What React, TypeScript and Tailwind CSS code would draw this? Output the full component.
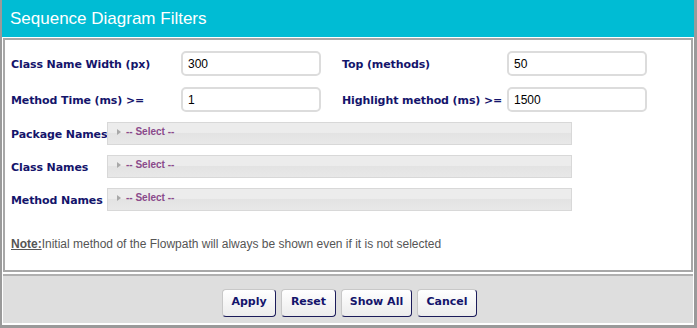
import React from 'react';

const labelCls = "font-['DejaVu_Sans',Verdana,sans-serif] text-[11px] font-bold text-[#14146b] whitespace-nowrap tracking-[-0.1px] pt-[3px]";

const TextField: React.FC<{ value: string }> = ({ value }) => (
  <div className="w-[140px] h-[25px] rounded-[5px] border-2 border-[#dcdcdc] bg-white px-[5px] flex items-center font-['Liberation_Sans',Arial,sans-serif] text-[12px] text-black">
    {value}
  </div>
);

const SelectRow: React.FC<{ label: string }> = ({ label }) => (
  <div className="flex items-center h-[23px]">
    <span className={`${labelCls} w-[96px]`}>{label}</span>
    <div className="w-[465px] h-[23px] border border-[#d8d8d8] bg-[linear-gradient(#ececec_0%,#ececec_45%,#e3e3e3_50%,#e8e8e8_100%)] flex items-start pt-[3px] pl-[9px]">
      <svg width="4" height="6" viewBox="0 0 4 6" className="mt-[3px] mr-[5px]">
        <path d="M0 0 L4 3 L0 6 Z" fill="#a8a8a8" />
      </svg>
      <span className="font-['Liberation_Sans',Arial,sans-serif] text-[10px] font-bold text-[#8a4a8a] leading-[12px]">-- Select --</span>
    </div>
  </div>
);

const Btn: React.FC<{ label: string; w: string }> = ({ label, w }) => (
  <button
    className={`${w} h-[28px] rounded-[4px] border border-[#c8c8c8] border-r-[#1c1c5a] border-b-[#1c1c5a] bg-[linear-gradient(#ffffff,#ececec)] font-['DejaVu_Sans',Verdana,sans-serif] text-[11px] font-bold text-[#14146b]`}
  >
    {label}
  </button>
);

export default function App() {
  return (
    <div className="w-[697px] h-[328px] bg-white overflow-hidden">
      <div className="w-full h-full border-l-2 border-r-[3px] border-b-[3px] border-[#9a9a9a] flex flex-col">
        <div className="h-[37px] bg-[#00bcd4] flex items-center pl-[8px] font-['Liberation_Sans',Arial,sans-serif] text-[17px] text-white">
          Sequence Diagram Filters
        </div>
        <div className="mt-px ml-px mr-px h-[234px] border-2 border-[#a8a8a8] flex flex-col pl-[6px] pt-[11px]">
          <div className="flex items-center h-[25px]">
            <span className={`${labelCls} w-[170px]`}>Class Name Width (px)</span>
            <TextField value="300" />
            <span className={`${labelCls} w-[165px] ml-[21px]`}>Top (methods)</span>
            <TextField value="50" />
          </div>
          <div className="flex items-center h-[25px] mt-[11px]">
            <span className={`${labelCls} w-[170px]`}>Method Time (ms) &gt;=</span>
            <TextField value="1" />
            <span className={`${labelCls} w-[165px] ml-[21px]`}>Highlight method (ms) &gt;=</span>
            <TextField value="1500" />
          </div>
          <div className="flex flex-col gap-[10px] mt-[10px]">
            <SelectRow label="Package Names" />
            <SelectRow label="Class Names" />
            <SelectRow label="Method Names" />
          </div>
          <div className="mt-[24px] font-['Liberation_Sans',Arial,sans-serif] text-[12px] text-[#555]">
            <span className="underline font-bold">Note:</span>Initial method of the Flowpath will always be shown even if it is not selected
          </div>
        </div>
        <div className="mt-[2px] mx-px mb-[2px] flex-1 bg-[#dedede] border-t-2 border-[#b0b0b0] flex items-center justify-center gap-[5px] pl-[3px] pt-[6px]">
          <Btn label="Apply" w="w-[54px]" />
          <Btn label="Reset" w="w-[55px]" />
          <Btn label="Show All" w="w-[71px]" />
          <Btn label="Cancel" w="w-[60px]" />
        </div>
      </div>
    </div>
  );
}
